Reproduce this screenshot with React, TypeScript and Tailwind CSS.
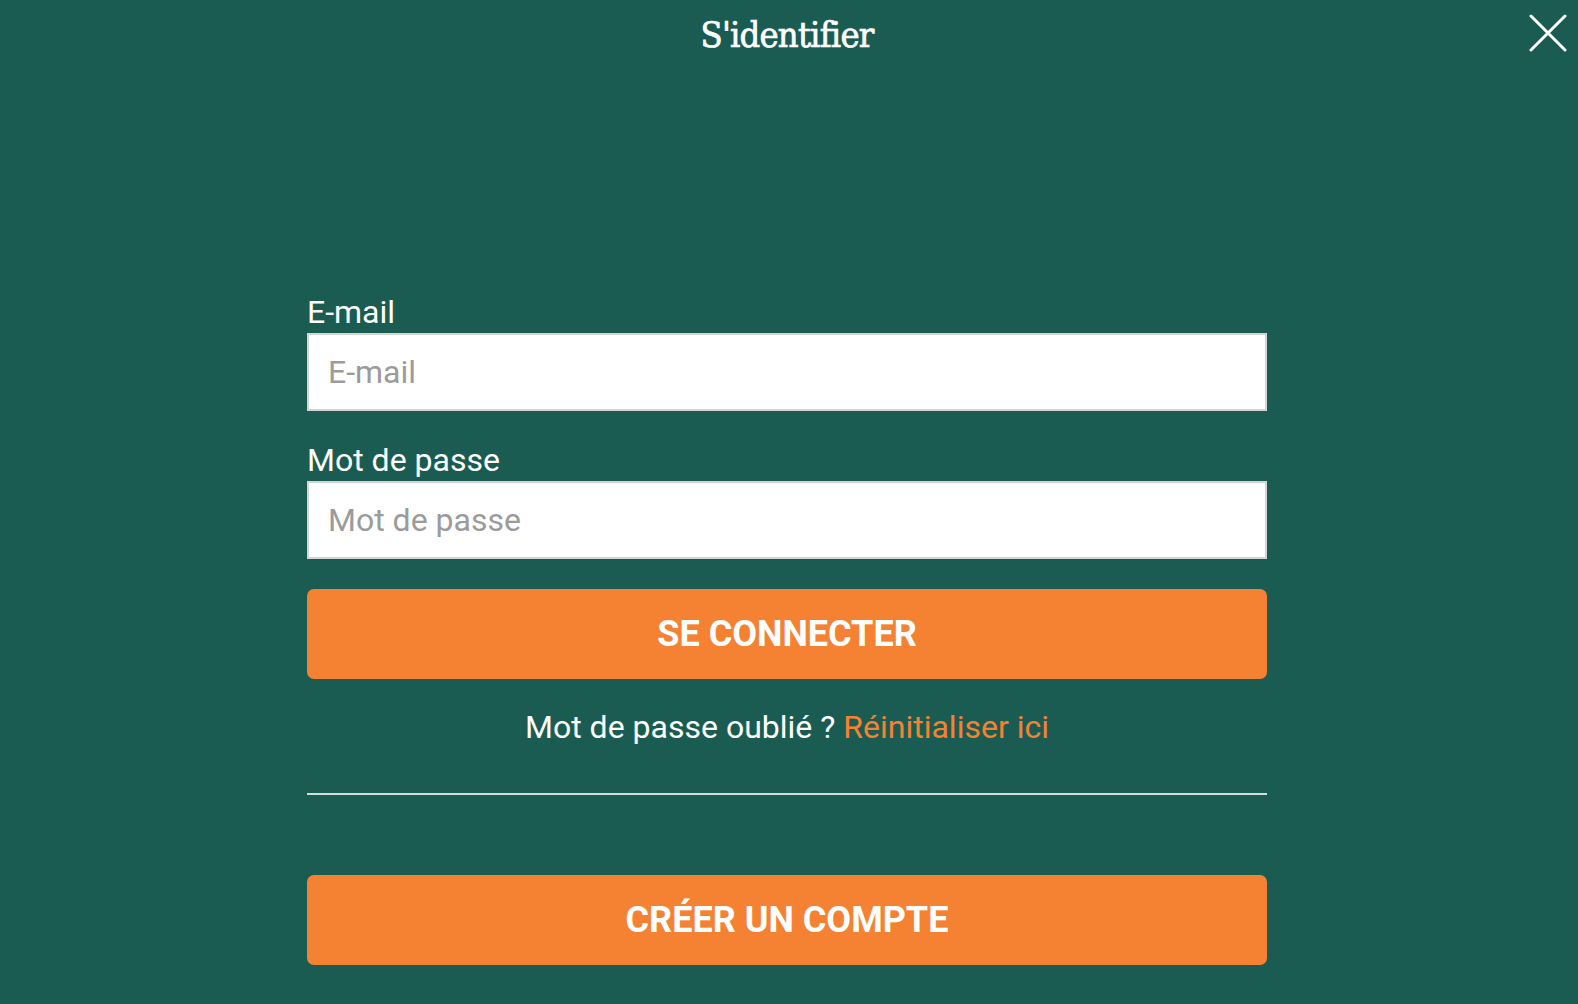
import React from 'react';

const sans = { fontFamily: 'Roboto, "Noto Sans", sans-serif' };

function CloseIcon() {
  return (
    <svg width="38" height="38" viewBox="0 0 38 38" fill="none" stroke="white" strokeWidth="3" strokeLinecap="round">
      <path d="M2 2L36 36M36 2L2 36" />
    </svg>
  );
}

export default function App() {
  return (
    <div className="relative w-full h-[1004px] bg-[#1b5c52] text-white" style={sans}>
      <div className="h-[70px] flex items-center justify-center pr-[4px]">
        <h1
          className="text-[36px] leading-none tracking-[-0.8px] [font-stretch:condensed] [-webkit-text-stroke:0.7px_white]"
          style={{ fontFamily: '"DejaVu Serif Condensed", "DejaVu Serif", "Liberation Serif", serif' }}
        >
          S'identifier
        </h1>
      </div>
      <button className="absolute top-[14px] right-[11px]" aria-label="Fermer">
        <CloseIcon />
      </button>

      <form className="w-[960px] ml-[307px] mt-[223px] flex flex-col" onSubmit={e => e.preventDefault()}>
        <label className="text-[32px] leading-[38px] mb-[2px]">E-mail</label>
        <input
          type="email"
          placeholder="E-mail"
          className="h-[78px] border-2 border-[#d4d4d4] bg-white px-[19px] text-[32px] text-gray-800 placeholder:text-[#9b9b9b] outline-none"
        />

        <label className="mt-[30px] text-[32px] leading-[38px] mb-[2px]">Mot de passe</label>
        <input
          type="password"
          placeholder="Mot de passe"
          className="h-[78px] border-2 border-[#d4d4d4] bg-white px-[19px] text-[32px] text-gray-800 placeholder:text-[#9b9b9b] outline-none"
        />

        <button className="mt-[30px] h-[90px] rounded-[7px] bg-[#f58233] text-[36px] font-bold uppercase">
          Se connecter
        </button>

        <p className="mt-[29px] text-center text-[32px] leading-[38px]">
          Mot de passe oublié ? <a href="#" className="text-[#f58233]">Réinitialiser ici</a>
        </p>

        <div className="mt-[47px] h-[2px] bg-[#cfe0dc]" />

        <button type="button" className="mt-[80px] h-[90px] rounded-[7px] bg-[#f58233] text-[36px] font-bold uppercase">
          Créer un compte
        </button>
      </form>
    </div>
  );
}
